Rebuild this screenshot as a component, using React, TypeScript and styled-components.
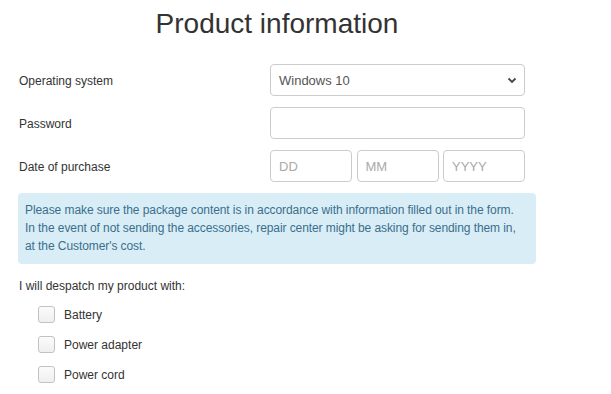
import React from "react";
import styled, { createGlobalStyle } from "styled-components";

const Global = createGlobalStyle`
  html, body { margin: 0; padding: 0; background: #fff; }
  body { font-family: "Liberation Sans", Arial, sans-serif; color: #333; }
  * { box-sizing: border-box; }
`;

const Page = styled.div`
  width: 518px;
  margin-left: 18px;
  display: flex;
  flex-direction: column;
`;

const Title = styled.h1`
  margin: 8px 0 25px;
  font-size: 28px;
  line-height: 31px;
  font-weight: 400;
  text-align: center;
  color: #333;
`;

const Row = styled.div`
  display: grid;
  grid-template-columns: 252px 255px;
  align-items: center;
  margin-bottom: 11px;
`;

const Label = styled.label`
  font-size: 12px;
  color: #333;
  padding-left: 1px;
  padding-top: 2px;
`;

const boxBase = `
  height: 32px;
  border: 1px solid #ccc;
  border-radius: 4px;
  background: #fff;
  font-family: "Liberation Sans", Arial, sans-serif;
  font-size: 13px;
  color: #555;
  padding: 0 8px;
`;

const SelectBox = styled.div`
  ${boxBase}
  display: flex;
  align-items: center;
  justify-content: space-between;
  padding-right: 7px;
`;

const Input = styled.input`
  ${boxBase}
  width: 100%;
  outline: none;
  &::placeholder { color: #aaa; }
`;

const DateGroup = styled.div`
  display: grid;
  grid-template-columns: 82px 82px 82px;
  column-gap: 4.5px;
`;

const Alert = styled.div`
  margin-top: 0;
  background: #d9edf7;
  color: #3a6f8c;
  border-radius: 4px;
  padding: 8px 7px 9px;
  font-size: 12px;
  line-height: 18px;
  letter-spacing: -0.08px;
`;

const Legend = styled.div`
  margin-top: 15px;
  font-size: 12px;
  color: #333;
  padding-left: 1px;
  line-height: 14px;
`;

const CheckList = styled.div`
  display: flex;
  flex-direction: column;
  gap: 13px;
  margin-top: 13px;
  padding-left: 20px;
`;

const CheckRow = styled.label`
  display: flex;
  align-items: center;
  gap: 9px;
  font-size: 12px;
  color: #333;
`;

const Box = styled.span`
  width: 17px;
  height: 17px;
  border: 1px solid #c2c2c2;
  border-radius: 3px;
  background: linear-gradient(#fbfbfb, #efefef);
`;

export default function App() {
  return (
    <>
      <Global />
      <Page>
        <Title>Product information</Title>
        <Row>
          <Label>Operating system</Label>
          <SelectBox>
            <span>Windows 10</span>
            <svg width="10" height="7" viewBox="0 0 10 7">
              <path d="M1.5 1.5 L5 5 L8.5 1.5" fill="none" stroke="#444" strokeWidth="1.8" />
            </svg>
          </SelectBox>
        </Row>
        <Row>
          <Label>Password</Label>
          <Input type="password" />
        </Row>
        <Row>
          <Label>Date of purchase</Label>
          <DateGroup>
            <Input placeholder="DD" />
            <Input placeholder="MM" />
            <Input placeholder="YYYY" />
          </DateGroup>
        </Row>
        <Alert>
          Please make sure the package content is in accordance with information filled out in the form.
          <br />
          In the event of not sending the accessories, repair center might be asking for sending them in,
          <br />
          at the Customer's cost.
        </Alert>
        <Legend>I will despatch my product with:</Legend>
        <CheckList>
          <CheckRow><Box />Battery</CheckRow>
          <CheckRow><Box />Power adapter</CheckRow>
          <CheckRow><Box />Power cord</CheckRow>
        </CheckList>
      </Page>
    </>
  );
}
